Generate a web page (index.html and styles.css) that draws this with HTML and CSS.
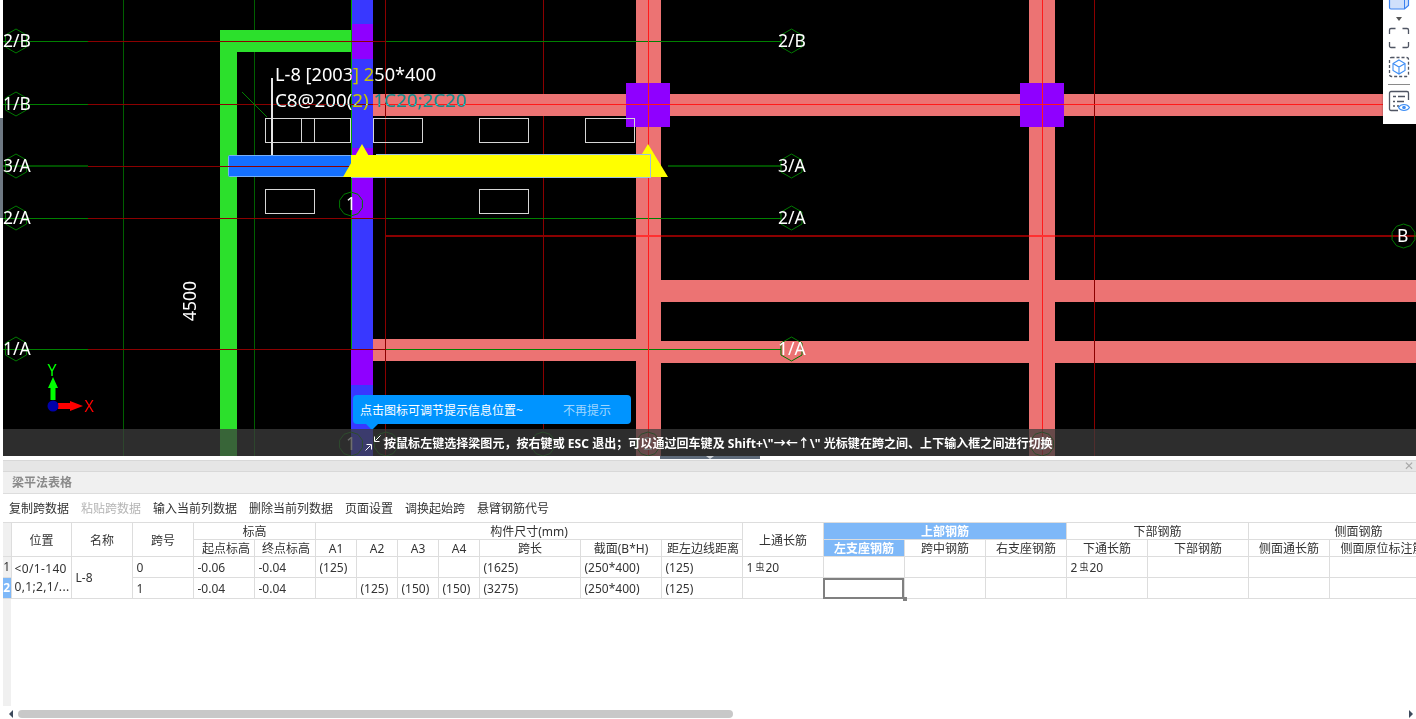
FILE: index.html
```html
<!DOCTYPE html>
<html lang="zh-CN">
<head>
<meta charset="utf-8">
<title>梁平法表格</title>
<link rel="stylesheet" href="styles.css">
</head>
<body>
<div class="app">
  <div class="top">
    <div class="edge"><span class="edge-handle"></span></div>
    <div class="canvas">
      <svg class="cad" viewBox="3 0 1413 456" width="1413" height="456" xmlns="http://www.w3.org/2000/svg">
        <defs>
          <polygon id="hex" class="tag" points="0,-12 10.5,-6 10.5,6 0,12 -10.5,6 -10.5,-6"/>
          <polygon id="deca" class="tag" points="0,-12 7,-9.7 11.4,-3.7 11.4,3.7 7,9.7 0,12 -7,9.7 -11.4,3.7 -11.4,-3.7 -7,-9.7"/>
        </defs>
        <rect class="bg" x="3" y="0" width="1413" height="456"/>

        <!-- grid verticals under members -->
        <path class="ln-green-d" d="M123.5 0V456M254.5 0V456"/>
        <path class="ln-dred" d="M543.5 0V429"/>

        <!-- green wall -->
        <path class="wall" d="M220 30H351V52H237V456H220Z"/>

        <!-- pink beams -->
        <path class="beam" d="M636 0H661V456H636ZM1029 0H1055V456H1029Z"/>
        <path class="beam" d="M373 94H1416V116H373ZM661 280H1416V302H661ZM373 339H636V361H373ZM661 341H1416V363H661Z"/>

        <!-- blue beam and purple columns -->
        <rect class="bluebeam" x="351" y="0" width="22" height="456"/>
        <path class="column" d="M351 24H373V59H351ZM351 148H373V219H351ZM351 349H373V385H351Z"/>
        <path class="column" d="M626 83H670V127H626ZM1020 83H1064V127H1020Z"/>

        <!-- selected span -->
        <rect class="selected" x="228.5" y="155.5" width="123" height="21" rx="1"/>

        <!-- axis lines -->
        <path class="ln-green-thin" d="M351.5 0V349"/>
        <path class="ln-green" d="M3 41.5H88M386 41.5H781M3 104.5H88M3 218.5H88M386 218.5H781M3 349.5H88M386 349.5H781"/>
        <path class="ln-green-w" d="M3 166H88M668 166H781"/>
        <path class="ln-dred" d="M88 41.5H386M88 104.5H373M88 166.5H352M88 218.5H386M88 349.5H386M385.5 0V456M1094.5 0V456"/>
        <path class="ln-dred-w" d="M386 236H1416"/>
        <path class="ln-red" d="M373 104.5H1383M648.5 0V456M1042.5 0V456"/>
        <path class="ln-red-w" d="M636 236H661M1029 236H1055"/>

        <!-- leader -->
        <path class="ln-green" d="M242 92L267 117"/>

        <!-- span boxes -->
        <g class="boxes">
          <rect x="265.5" y="118.5" width="85" height="24"/>
          <path d="M301.5 118V143M314.5 118V143"/>
          <rect x="373.5" y="118.5" width="49" height="24"/>
          <rect x="479.5" y="118.5" width="49" height="24"/>
          <rect x="585.5" y="118.5" width="49" height="24"/>
          <rect x="265.5" y="189.5" width="49" height="24"/>
          <rect x="479.5" y="189.5" width="49" height="24"/>
        </g>
        <rect class="leader" x="271" y="78" width="2" height="77"/>

        <!-- yellow arrow -->
        <rect class="yellow" x="351" y="155" width="299" height="22"/>
        <polygon class="yellow" points="362,144 343,177 381,177"/>
        <polygon class="yellow" points="648,144 628,177 668,177"/>
        <path class="band-edge" d="M376 154.5H650.5V177.5H351"/>

        <!-- axis tags -->
        <use href="#hex" x="16" y="41"/><use href="#hex" x="16" y="104"/><use href="#hex" x="16" y="166"/><use href="#hex" x="16" y="218"/><use href="#hex" x="16" y="349"/>
        <use href="#hex" x="791.5" y="41"/><use href="#hex" x="791.5" y="166"/><use href="#hex" x="791.5" y="218"/><use href="#hex" x="791.5" y="349"/>
        <use href="#deca" x="351" y="204"/><use href="#deca" x="1403.5" y="236"/>
        <use href="#deca" x="351" y="444"/><use href="#deca" x="386" y="444"/><use href="#deca" x="543" y="444"/><use href="#deca" x="648" y="444"/><use href="#deca" x="1042" y="444"/>
        <g class="cad-text">
          <text x="3" y="47">2/B</text><text x="3" y="110">1/B</text><text x="3" y="172">3/A</text><text x="3" y="224">2/A</text><text x="3" y="355">1/A</text>
          <text x="778" y="47">2/B</text><text x="778" y="172">3/A</text><text x="778" y="224">2/A</text><text x="778" y="355">1/A</text>
          <text x="346" y="210">1</text><text x="1397" y="242">B</text>
          <text x="346" y="450">1</text><text x="381" y="450">1</text><text x="538" y="450">1</text><text x="643" y="450">2</text><text x="1037" y="450">3</text>
          <text x="0" y="0" transform="translate(196 321) rotate(-90)">4500</text>
        </g>
        <g class="cad-text tip-text">
          <text class="tip-l1" x="275" y="81">L-8 [2003] 250*400</text>
          <text class="tip-l2" x="275" y="107">C8@200(2) 1C20;2C20</text>
        </g>

        <!-- coordinate axes -->
        <path class="axis-y" d="M50.5 400V388H48L53 377L58 388H55.5V400Z"/>
        <path class="axis-x" d="M58 403H70V401L83 406L70 411V409H58Z"/>
        <circle class="axis-o" cx="53" cy="406" r="5.5"/>
        <text class="axis-ly" x="47.5" y="376">Y</text>
        <text class="axis-lx" x="84.5" y="412">X</text>
      </svg>

      <div class="tip">
        <span class="tip-msg">点击图标可调节提示信息位置~</span>
        <span class="tip-off">不再提示</span>
      </div>

      <div class="hint">
        <svg class="hint-icon" viewBox="0 0 16 16" width="16" height="16" xmlns="http://www.w3.org/2000/svg">
          <path d="M0.5 15.5L5.5 10.5M1.5 9.5H6.5V14.5M15.5 0.5L10.5 5.5M9.5 1.5V6.5H14.5"/>
        </svg>
        <span class="hint-text">按鼠标左键选择梁图元，按右键或 ESC 退出；可以通过回车键及 Shift+\"→←↑\" 光标键在跨之间、上下输入框之间进行切换</span>
      </div>

      <div class="side-tools">
        <svg viewBox="0 0 33 124" width="33" height="124" xmlns="http://www.w3.org/2000/svg">
          <path class="ic-cube" d="M6.5 -2V7.5A1.5 1.5 0 0 0 8 9H21.5L25.5 5.5V-2Z"/>
          <path class="ic-cube-l" d="M21.5 9V0"/>
          <polygon class="ic-caret" points="13,17 19,17 16,21"/>
          <path class="ic-gray" d="M6.5 34V30A1.5 1.5 0 0 1 8 28.5H12.5M19.5 28.5H24A1.5 1.5 0 0 1 25.5 30V34M25.5 42V46A1.5 1.5 0 0 1 24 47.5H19.5M12.5 47.5H8A1.5 1.5 0 0 1 6.5 46V42"/>
          <rect class="ic-dash" x="6.5" y="57.5" width="19" height="19" rx="2"/>
          <path class="ic-blue" d="M16 60L22 63.5V70.5L16 74L10 70.5V63.5ZM10 63.5L16 67L22 63.5M16 67V74"/>
          <path class="ic-rule" d="M5 84.5H27"/>
          <path class="ic-gray" d="M25.5 100V93A1.5 1.5 0 0 0 24 91.5H8A1.5 1.5 0 0 0 6.5 93V109A1.5 1.5 0 0 0 8 110.5H15M10 96.5H13M15 96.5H22M10 101.5H12M14 101.5H21M10 106H12M14 106H16"/>
          <path class="ic-blue" d="M15.5 107.5C18 103.5 24 103.5 26.5 107.5C24 111.5 18 111.5 15.5 107.5Z"/>
          <circle class="ic-pupil" cx="21" cy="107.5" r="1.8"/>
        </svg>
      </div>
    </div>
  </div>

  <div class="sash"><span class="sash-handle"></span></div>

  <section class="panel">
    <div class="panel-strip"><span class="panel-close">✕</span></div>
    <div class="panel-title">梁平法表格</div>
    <div class="toolbar">
      <span>复制跨数据</span>
      <span class="off">粘贴跨数据</span>
      <span>输入当前列数据</span>
      <span>删除当前列数据</span>
      <span>页面设置</span>
      <span>调换起始跨</span>
      <span>悬臂钢筋代号</span>
    </div>
    <div class="grid-wrap">
      <table class="grid">
        <colgroup>
          <col class="c8"><col class="c60"><col class="c61"><col class="c61"><col class="c61"><col class="c61">
          <col class="c41"><col class="c41"><col class="c41"><col class="c41">
          <col class="c101"><col class="c81"><col class="c81"><col class="c81">
          <col class="c81"><col class="c81"><col class="c81">
          <col class="c81"><col class="c101">
          <col class="c81"><col class="c106"><col class="c33">
        </colgroup>
        <thead>
          <tr>
            <th rowspan="2" class="gut"></th>
            <th rowspan="2">位置</th>
            <th rowspan="2">名称</th>
            <th rowspan="2">跨号</th>
            <th colspan="2">标高</th>
            <th colspan="7">构件尺寸(mm)</th>
            <th rowspan="2">上通长筋</th>
            <th colspan="3" class="hl">上部钢筋</th>
            <th colspan="2">下部钢筋</th>
            <th colspan="3">侧面钢筋</th>
          </tr>
          <tr>
            <th class="n3">起点标高</th><th class="n2">终点标高</th>
            <th>A1</th><th>A2</th><th>A3</th><th>A4</th>
            <th>跨长</th><th>截面(B*H)</th><th class="n2">距左边线距离</th>
            <th class="hl">左支座钢筋</th><th>跨中钢筋</th><th>右支座钢筋</th>
            <th>下通长筋</th><th>下部钢筋</th>
            <th>侧面通长筋</th><th>侧面原位标注筋</th><th></th>
          </tr>
        </thead>
        <tbody>
          <tr>
            <td class="gut">1</td>
            <td rowspan="2" class="pos">&lt;0/1-140<br>0,1;2,1/...</td>
            <td rowspan="2" class="name">L-8</td>
            <td>0</td><td>-0.06</td><td>-0.04</td>
            <td>(125)</td><td></td><td></td><td></td>
            <td>(1625)</td><td>(250*400)</td><td>(125)</td>
            <td>1<span class="rebar">虫</span>20</td>
            <td></td><td></td><td></td>
            <td>2<span class="rebar">虫</span>20</td>
            <td></td><td></td><td></td><td></td>
          </tr>
          <tr>
            <td class="gut sel">2</td>
            <td>1</td><td>-0.04</td><td>-0.04</td>
            <td></td><td>(125)</td><td>(150)</td><td>(150)</td>
            <td>(3275)</td><td>(250*400)</td><td>(125)</td>
            <td></td>
            <td class="active"></td><td></td><td></td>
            <td></td><td></td><td></td><td></td><td></td>
          </tr>
        </tbody>
      </table>
      <div class="gut-fill"></div>
    </div>
    <div class="hscroll">
      <span class="arrow-l"></span>
      <span class="thumb"></span>
      <span class="arrow-r"></span>
    </div>
  </section>
</div>
</body>
</html>
```
FILE: styles.css
```css
* { box-sizing: border-box; }
html, body { margin: 0; padding: 0; background: #fff; }
body {
  width: 1416px;
  height: 719px;
  overflow: hidden;
  font-family: "Noto Sans", "Noto Sans CJK SC", sans-serif;
  font-size: 12px;
  color: #333;
}
.app { display: flex; flex-direction: column; height: 719px; }

/* CAD area */
.top { display: flex; height: 456px; flex: none; }
.edge { width: 3px; flex: none; padding-top: 118px; }
.edge-handle { display: block; width: 3px; height: 100px; background: #6e7883; }
.canvas { position: relative; flex: 1; overflow: hidden; background: #000; }
.cad { display: block; }
.bg { fill: #000; }
.wall { fill: #2ce02c; }
.beam { fill: #ec7373; }
.bluebeam { fill: #3838ff; }
.column { fill: #8f00ff; }
.selected { fill: #1470ff; stroke: #78aef5; stroke-width: 1; }
.band-edge { fill: none; stroke: #9cc0e0; stroke-width: 1; shape-rendering: crispEdges; }
.yellow { fill: #ffff00; }
.boxes rect, .boxes path { fill: none; stroke: #d6d6d6; stroke-width: 1; shape-rendering: crispEdges; }
.leader { fill: #e4e4e4; }
.ln-green, .ln-green-d, .ln-green-w, .ln-green-thin, .ln-dred, .ln-dred-w, .ln-red, .ln-red-w { fill: none; stroke-width: 1; }
.ln-green { stroke: #008000; }
.ln-green-d { stroke: #005f00; shape-rendering: crispEdges; }
.ln-green-thin { stroke: #00a000; shape-rendering: crispEdges; }
.ln-green-w { stroke: #005000; stroke-width: 2; shape-rendering: crispEdges; }
.ln-dred { stroke: #8b0000; shape-rendering: crispEdges; }
.ln-dred-w { stroke: #8b0000; stroke-width: 2; shape-rendering: crispEdges; }
.ln-red { stroke: #ff1a1a; shape-rendering: crispEdges; }
.ln-red-w { stroke: #ff3030; stroke-width: 2; shape-rendering: crispEdges; }
.tag { fill: none; stroke: #007a00; stroke-width: 1; }
.cad-text text { fill: #fff; font-family: "Noto Sans", sans-serif; font-size: 17.5px; }
.tip-text { mix-blend-mode: difference; }
.tip-text .tip-l1 { font-size: 18.2px; }
.tip-text .tip-l2 { font-size: 18.8px; }
.axis-y { fill: #00ff00; }
.axis-x { fill: #ff0000; }
.axis-o { fill: #0000aa; }
.axis-ly, .axis-lx { font-family: "Noto Sans", sans-serif; font-size: 16px; }
.axis-ly { fill: #00ff00; }
.axis-lx { fill: #ff0000; }

/* bubble */
.tip {
  position: absolute;
  left: 350px;
  top: 395px;
  width: 278px;
  height: 29px;
  display: flex;
  align-items: center;
  padding-left: 7px;
  background: #0094ff;
  border-radius: 4px;
  color: #fff;
}
.tip::after {
  content: "";
  position: absolute;
  left: 13px;
  top: 29px;
  border: 6px solid transparent;
  border-top-color: #0094ff;
  border-bottom-width: 0;
}
.tip-msg { width: 203px; flex: none; }
.tip-off { color: #9fd6ff; }

/* status hint */
.hint {
  position: absolute;
  left: 0;
  right: 0;
  top: 429px;
  height: 27px;
  display: flex;
  align-items: center;
  padding-left: 362px;
  background: rgba(60, 60, 60, .75);
  color: #fff;
  font-weight: 700;
}
.hint-icon { flex: none; margin-right: 3px; }
.hint-icon path { fill: none; stroke: #fff; stroke-width: 1; }
.hint-text { white-space: nowrap; letter-spacing: .045px; }

/* right tools */
.side-tools {
  position: absolute;
  right: 0;
  top: 0;
  width: 33px;
  height: 124px;
  background: #fff;
  box-shadow: 0 0 2px rgba(0, 0, 0, .4);
}
.side-tools svg { display: block; }
.ic-cube { fill: #cfe0fb; stroke: #3b82f0; stroke-width: 1.2; }
.ic-cube-l { fill: none; stroke: #3b82f0; stroke-width: 1; }
.ic-caret { fill: #555; }
.ic-gray { fill: none; stroke: #4f5563; stroke-width: 1.3; }
.ic-dash { fill: none; stroke: #4f5563; stroke-width: 1.3; stroke-dasharray: 3 2; }
.ic-blue { fill: none; stroke: #3f8ff5; stroke-width: 1.1; }
.ic-pupil { fill: #3f8ff5; }
.ic-rule { fill: none; stroke: #8a8a8a; stroke-width: 1; }

/* sash */
.sash { height: 4px; flex: none; padding-left: 660px; background: #fff; }
.sash-handle { display: block; position: relative; width: 100px; height: 3px; background: #5f6b7a; }
.sash-handle::after {
  content: "";
  position: absolute;
  left: 46px;
  top: 0;
  border: 4px solid transparent;
  border-top: 3px solid #cfd3d8;
  border-bottom-width: 0;
}

/* lower panel */
.panel { flex: 1; min-height: 0; margin-left: 3px; display: flex; flex-direction: column; background: #fff; }
.panel-strip {
  height: 12px;
  flex: none;
  display: flex;
  justify-content: flex-end;
  align-items: center;
  padding-right: 2px;
  background: #e6e6e6;
  border-top: 1px solid #d8d8d8;
  border-bottom: 1px solid #d8d8d8;
}
.panel-close { font-size: 12px; line-height: 10px; color: #aaa; }
.panel-title {
  height: 22px;
  flex: none;
  padding-left: 9px;
  line-height: 21px;
  font-weight: 700;
  color: #8a8a8a;
  background: #f0f0f0;
  border-bottom: 1px solid #ddd;
}
.toolbar {
  height: 28px;
  flex: none;
  display: flex;
  align-items: center;
  gap: 12px;
  padding-left: 6px;
  color: #333;
}
.toolbar .off { color: #b5b5b5; }

.grid-wrap { flex: 1; min-height: 0; overflow: hidden; display: flex; flex-direction: column; }
.grid { border-collapse: collapse; table-layout: fixed; width: 1465px; flex: none; }
.c8 { width: 8px; }
.c60 { width: 60px; }
.c61 { width: 61px; }
.c41 { width: 41px; }
.c101 { width: 101px; }
.c81 { width: 81px; }
.c106 { width: 106px; }
.c33 { width: 33px; }
.grid th, .grid td {
  border: 1px solid #ddd;
  padding: 0 4px;
  font-weight: 400;
  white-space: nowrap;
  overflow: hidden;
  color: #333;
}
.grid th { line-height: 14px; }
.grid td { line-height: 14px; padding-top: 2px; text-align: left; }
.grid thead tr { height: 17px; }
.grid tbody tr { height: 21px; }
.grid th { text-align: center; padding: 2px 0 0 1px; }
.grid th.n3 { padding-left: 5px; }
.grid th.n2 { padding-left: 3px; }
.grid .gut { background: #f0f0f0; padding: 0; text-align: center; border-left: 0; }
.grid .gut.sel { background: #7eb8f8; color: #fff; font-weight: 700; }
.grid .hl { background: #7eb8f8; color: #fff; font-weight: 700; }
.grid td.pos { line-height: 18px; padding: 0 0 0 3px; letter-spacing: .35px; }
.grid td.name { padding-top: 0; line-height: 16px; }
.grid td.active { position: relative; overflow: visible; outline: 2px solid #808080; outline-offset: -2px; }
.grid td.active::after {
  content: "";
  position: absolute;
  right: -3px;
  bottom: -3px;
  width: 4px;
  height: 4px;
  background: #808080;
}
.rebar { display: inline-block; font-size: 9px; line-height: 9px; vertical-align: 2px; margin: 0 1px 0 2px; font-family: "Noto Sans CJK SC", sans-serif; }
.gut-fill { flex: 1; width: 8px; background: #f0f0f0; }

.hscroll { height: 13px; flex: none; display: flex; align-items: center; padding-top: 2px; }
.thumb { display: block; width: 715px; height: 8px; margin-left: 5px; background: #c8c8c8; border-radius: 4px; }
.arrow-l { display: block; width: 0; height: 0; margin-left: 6px; border: 4px solid transparent; border-right-color: #3d4a5c; border-left-width: 0; }
.arrow-r { display: block; width: 0; height: 0; margin-left: auto; margin-right: 3px; border: 4px solid transparent; border-left-color: #3d4a5c; border-right-width: 0; }
```
